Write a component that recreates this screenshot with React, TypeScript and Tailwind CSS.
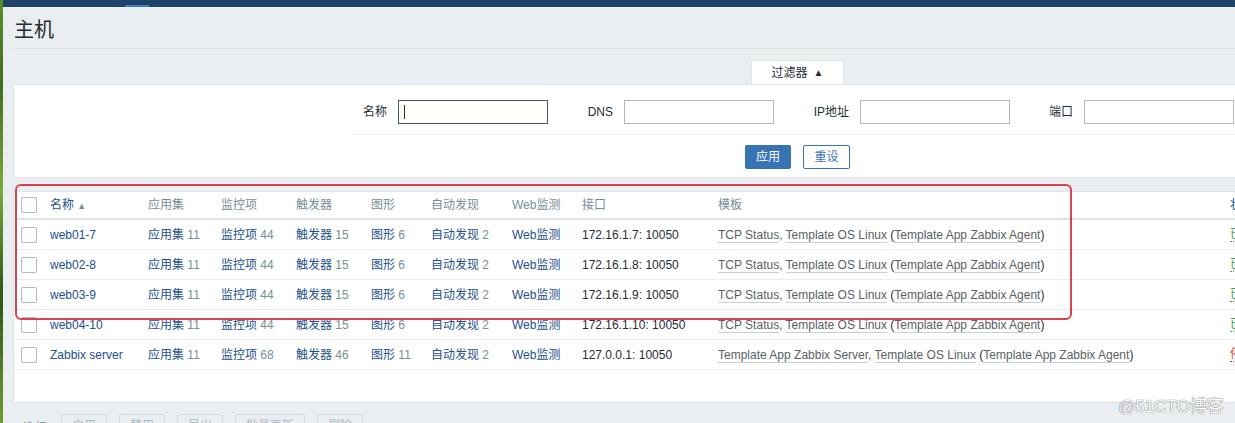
import React from 'react';

type Host = {
  name: string;
  apps: number;
  items: number;
  triggers: number;
  graphs: number;
  discovery: number;
  ip: string;
  templates: string[];
  parent: string;
  enabled: boolean;
};

const hosts: Host[] = [
  { name: 'web01-7', apps: 11, items: 44, triggers: 15, graphs: 6, discovery: 2, ip: '172.16.1.7: 10050', templates: ['TCP Status', 'Template OS Linux'], parent: 'Template App Zabbix Agent', enabled: true },
  { name: 'web02-8', apps: 11, items: 44, triggers: 15, graphs: 6, discovery: 2, ip: '172.16.1.8: 10050', templates: ['TCP Status', 'Template OS Linux'], parent: 'Template App Zabbix Agent', enabled: true },
  { name: 'web03-9', apps: 11, items: 44, triggers: 15, graphs: 6, discovery: 2, ip: '172.16.1.9: 10050', templates: ['TCP Status', 'Template OS Linux'], parent: 'Template App Zabbix Agent', enabled: true },
  { name: 'web04-10', apps: 11, items: 44, triggers: 15, graphs: 6, discovery: 2, ip: '172.16.1.10: 10050', templates: ['TCP Status', 'Template OS Linux'], parent: 'Template App Zabbix Agent', enabled: true },
  { name: 'Zabbix server', apps: 11, items: 68, triggers: 46, graphs: 11, discovery: 2, ip: '127.0.0.1: 10050', templates: ['Template App Zabbix Server', 'Template OS Linux'], parent: 'Template App Zabbix Agent', enabled: false },
];

const cols = 'grid grid-cols-[36px_98px_73px_75px_75px_60px_81px_70px_136px_512px_100px] items-center';

const Checkbox = () => (
  <div className="ml-[7px] w-4 h-4 rounded-[2px] border border-[#acbbc2] bg-white" />
);

const LinkCount = ({ label, n }: { label: string; n: number }) => (
  <span className="whitespace-nowrap">
    <span className="text-[#234f8c]">{label}</span>
    <span className="text-[#768d99]"> {n}</span>
  </span>
);

const Tpl = ({ children }: { children: React.ReactNode }) => (
  <span className="text-[#5a5f63] border-b border-[#c7d0d5] leading-[13px]">{children}</span>
);

const FilterField = ({ label, labelWidth, focused }: { label: string; labelWidth: string; focused?: boolean }) => (
  <div className="flex items-center">
    <div className={`${labelWidth} text-right pr-[11px] text-[#1f2c33]`}>{label}</div>
    <div className={`w-[150px] h-6 bg-white border flex items-center ${focused ? 'border-[#3d5b78]' : 'border-[#acbbc2]'}`}>
      {focused && <div className="ml-[5px] w-px h-[14px] bg-[#1f2c33]" />}
    </div>
  </div>
);

export default function App() {
  return (
    <div className="flex w-[1235px] h-[423px] overflow-hidden text-[12px] font-['Liberation_Sans','Noto_Sans_CJK_SC',sans-serif]">
      {/* desktop edge */}
      <div className="w-[3px] shrink-0 bg-[linear-gradient(180deg,#5a8d2c,#3f6e1f_20%,#78a83a_45%,#2f5418_70%,#6c9d33)]" />

      <div className="relative flex-1 bg-[#ebeef0] overflow-hidden">
        {/* top nav */}
        <div className="relative h-[7px] bg-[#1f4467]">
          <div className="absolute left-[122px] bottom-0 w-6 h-[2px] bg-[#3f7fc1]" />
        </div>

        <div className="w-[1260px] pl-[10px]">
          <div className="h-[42px] flex items-center border-b border-[#dfe4e7]">
            <h1 className="text-[20px] leading-none text-[#1f2c33] pl-px pt-[4px]">主机</h1>
          </div>

          {/* filter tab */}
          <div className="flex mt-[11px]">
            <div className="ml-[738px] w-[93px] h-6 bg-white border border-b-0 border-[#dfe4e7] flex items-center justify-center text-[#1f2c33]">
              过滤器 <span className="ml-[6px] text-[10px]">▲</span>
            </div>
          </div>

          {/* filter panel */}
          <div className="bg-white border border-[#dfe4e7] h-[94px] pt-[15px]">
            <div className="ml-[340px] flex">
              <FilterField label="名称" labelWidth="w-[44px]" focused />
              <FilterField label="DNS" labelWidth="w-[76px]" />
              <FilterField label="IP地址" labelWidth="w-[86px]" />
              <FilterField label="端口" labelWidth="w-[74px]" />
            </div>
            <div className="ml-[340px] mt-[10px] border-t border-[#ebeef0] pt-[10px] flex">
              <div className="ml-[391px] flex gap-3">
                <div className="w-[46px] h-6 rounded-[2px] bg-[#3873b4] text-white flex items-center justify-center">应用</div>
                <div className="w-[47px] h-6 rounded-[2px] bg-white border border-[#3873b4] text-[#3873b4] flex items-center justify-center">重设</div>
              </div>
            </div>
          </div>

          {/* hosts table */}
          <div className="mt-[13px] bg-white border border-[#dfe4e7] h-[212px]">
            <div className={`${cols} h-[28px] border-b-2 border-[#dfe4e7] text-[#768d99]`}>
              <Checkbox />
              <div className="text-[#234f8c]">名称 <span className="text-[9px] text-[#768d99]">▲</span></div>
              <div>应用集</div>
              <div>监控项</div>
              <div>触发器</div>
              <div>图形</div>
              <div>自动发现</div>
              <div>Web监测</div>
              <div>接口</div>
              <div>模板</div>
              <div className="text-[#234f8c]">状态</div>
            </div>
            {hosts.map((h) => (
              <div key={h.name} className={`${cols} h-[30px] border-b border-[#ebeef0]`}>
                <Checkbox />
                <div className="text-[#234f8c] whitespace-nowrap">{h.name}</div>
                <LinkCount label="应用集" n={h.apps} />
                <LinkCount label="监控项" n={h.items} />
                <LinkCount label="触发器" n={h.triggers} />
                <LinkCount label="图形" n={h.graphs} />
                <LinkCount label="自动发现" n={h.discovery} />
                <div className="text-[#234f8c]">Web监测</div>
                <div className="text-[#1f2c33] whitespace-nowrap">{h.ip}</div>
                <div className="whitespace-nowrap text-[#1f2c33]">
                  {h.templates.map((t, i) => (
                    <React.Fragment key={t}>
                      {i > 0 && <span className="text-[#5a5f63]">, </span>}
                      <Tpl>{t}</Tpl>
                    </React.Fragment>
                  ))}{' '}
                  (<Tpl>{h.parent}</Tpl>)
                </div>
                <div className={`whitespace-nowrap border-b border-dotted w-fit leading-[13px] ${h.enabled ? 'text-[#429e47] border-[#429e47]' : 'text-[#e33734] border-[#e33734]'}`}>
                  {h.enabled ? '已启用' : '停用的'}
                </div>
              </div>
            ))}
          </div>

          {/* mass actions */}
          <div className="flex items-start mt-[11px]">
            <div className="text-[#768d99] mt-[5px] w-[48px] shrink-0 whitespace-nowrap">0 选择</div>
            <div className="flex gap-3">
              {['启用', '禁用', '导出', '批量更新', '删除'].map((b) => (
                <div key={b} className={`${b === '批量更新' ? 'w-[70px]' : 'w-[46px]'} h-6 rounded-[2px] border border-[#d6dde1] bg-[#ebeef0] text-[#acbbc2] flex items-center justify-center`}>
                  {b}
                </div>
              ))}
            </div>
          </div>
        </div>

        {/* red annotation box */}
        <div className="absolute left-[12px] top-[184px] w-[1057px] h-[136px] rounded-[6px] border-2 border-[#d8434d] pointer-events-none" />

        {/* watermark */}
        <div className="absolute left-[1115px] top-[394px] text-[17px] text-white [text-shadow:0_0_1px_#6a7075,0_0_1px_#6a7075] whitespace-nowrap">
          @51CTO博客
        </div>
      </div>
    </div>
  );
}
